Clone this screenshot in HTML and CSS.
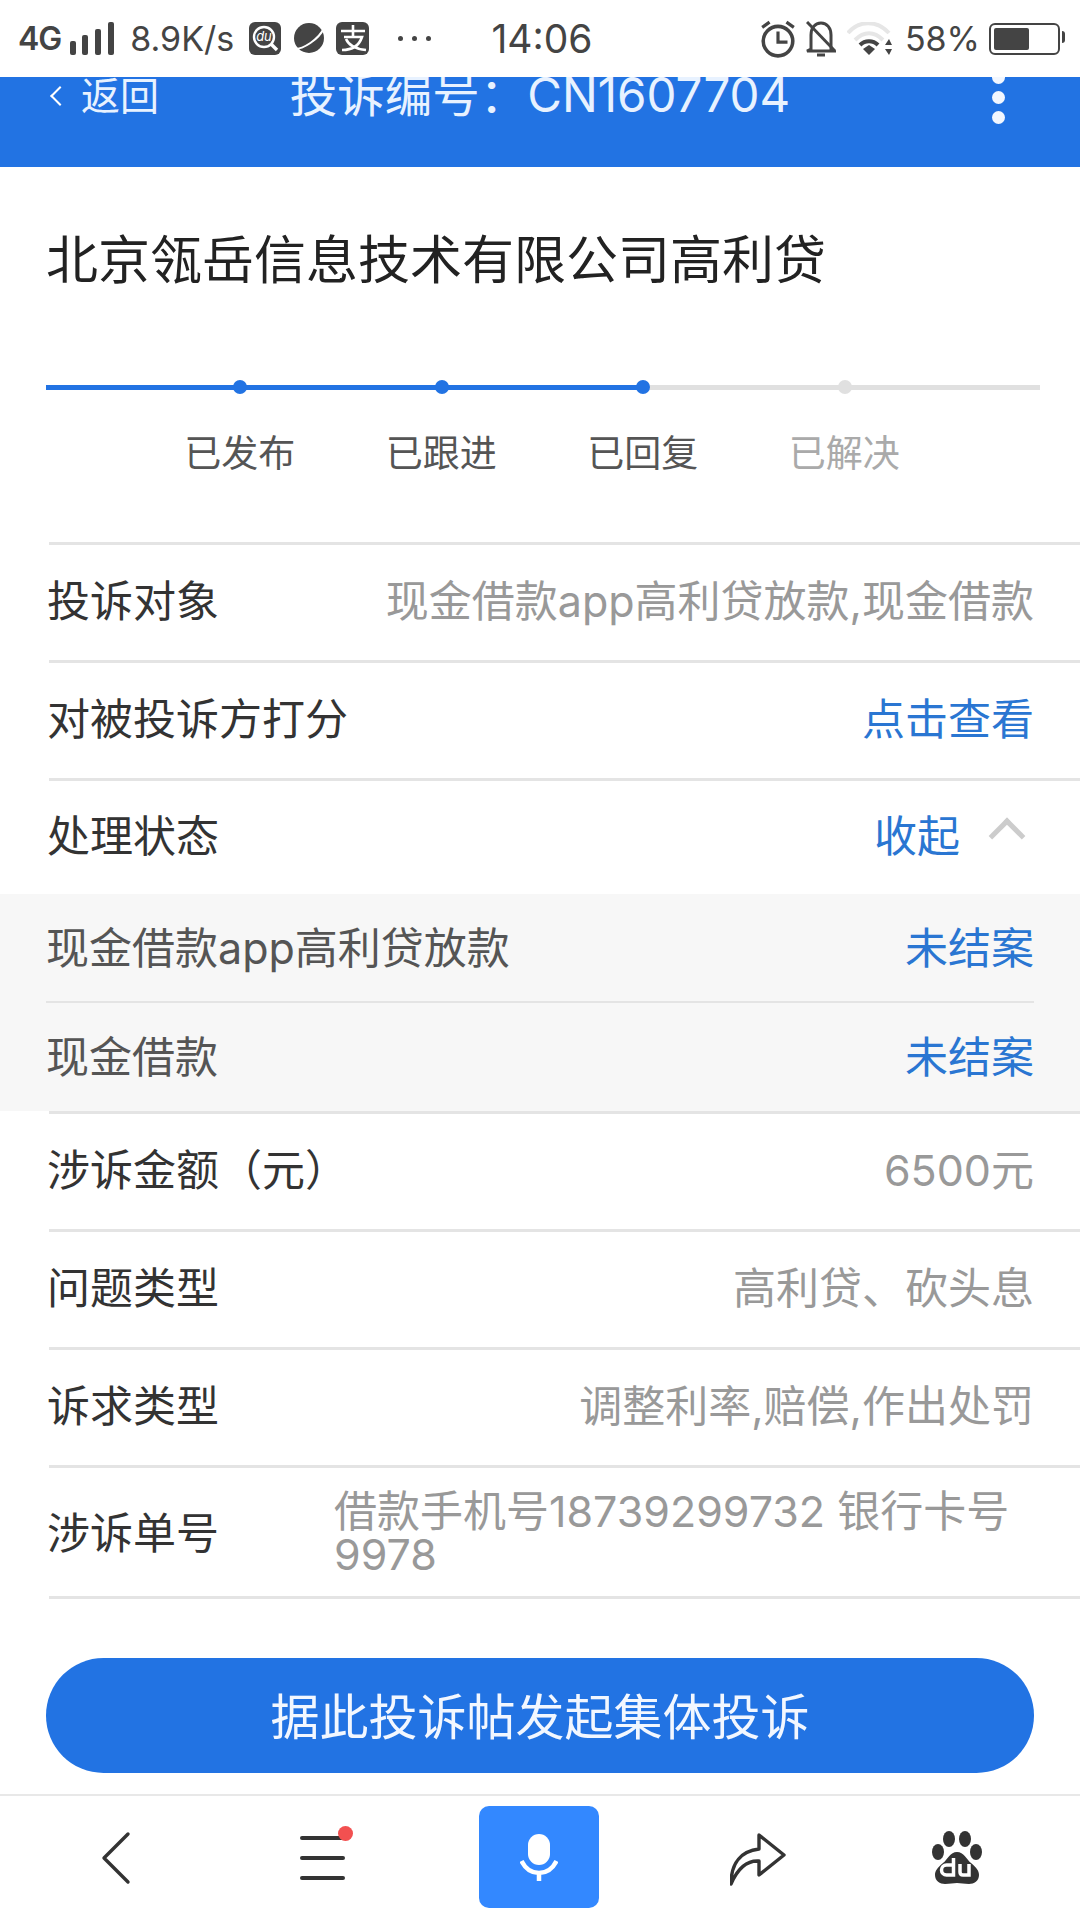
FILE: index.html
```html
<!DOCTYPE html>
<html lang="zh-CN">
<head>
  <meta charset="UTF-8" />
  <meta name="viewport" content="width=device-width, initial-scale=1.0"/>
  <title>投诉详情</title>
  <link rel="stylesheet" href="styles.css">
</head>
<body>

  <div class="statusbar">
    <div class="status-left">
      <span class="net">4G</span>
      <svg class="signal" width="44" height="34" viewBox="0 0 44 34"><g fill="#444"><rect x="0" y="19" width="6" height="14" rx="2"/><rect x="12" y="13" width="6" height="20" rx="2"/><rect x="25" y="7" width="6" height="26" rx="2"/><rect x="38" y="0" width="6" height="33" rx="2"/></g></svg>
      <span class="speed">8.9K/s</span>
      <svg class="app" width="32" height="33" viewBox="0 0 32 33"><rect width="32" height="33" rx="6" fill="#444"/><circle cx="15" cy="15" r="10" fill="none" stroke="#fff" stroke-width="2.4"/><path d="M22 22l6 6" stroke="#fff" stroke-width="3.4"/><text x="15" y="19" class="app-du">du</text></svg>
      <svg class="app" width="33" height="33" viewBox="0 0 33 33"><circle cx="17" cy="16" r="15" fill="#444"/><path d="M1 27C11 28 27 17 32 6" fill="none" stroke="#fff" stroke-width="2"/></svg>
      <svg class="app" width="33" height="33" viewBox="0 0 33 33"><rect width="33" height="33" rx="6" fill="#444"/><path d="M5 9h24M17 3v12M8 15h18c-3 9-10 13-20 13M10 17c3 7 10 10 20 11" fill="none" stroke="#fff" stroke-width="2.6"/></svg>
      <span class="dots3"><i></i><i></i><i></i></span>
    </div>
    <div class="clock">14:06</div>
    <div class="status-right">
      <svg class="st-alarm" width="36" height="38" viewBox="0 0 34 36"><circle cx="17" cy="20" r="14" fill="none" stroke="#444" stroke-width="3.4"/><path d="M17 11v10h9" fill="none" stroke="#444" stroke-width="3"/><path d="M2 7l7-5M32 7l-7-5" stroke="#444" stroke-width="3"/></svg>
      <svg class="st-bell" width="30" height="36" viewBox="0 0 30 36"><path d="M5 28V14C5 7 9 2 15 2s10 5 10 12v14l3 2H1zM11 34h8" fill="none" stroke="#444" stroke-width="3"/><path d="M1 1l28 29" stroke="#444" stroke-width="3"/></svg>
      <svg class="st-wifi" width="46" height="34" viewBox="0 0 46 34"><path d="M1 11C12 -2 30 -2 42 11M8 18C17 9 27 9 36 18" fill="none" stroke="#e6e6e6" stroke-width="4"/><path d="M13 23C18 18 26 18 31 23" fill="none" stroke="#444" stroke-width="4"/><path d="M16 27l6-4 6 4-6 6z" fill="#444"/><path d="M42 17l3 6h-7zM42 33l3-6h-7z" fill="#444"/></svg>
      <span class="battery-pct">58%</span>
      <div class="battery"><div class="battery-level"></div></div>
    </div>
  </div>

  <header class="topbar">
    <div class="back"><span class="back-arrow"></span>返回</div>
    <div class="topbar-title">投诉编号：CN1607704</div>
    <div class="more"><i></i><i></i><i></i></div>
  </header>

  <main>
    <h1 class="title">北京瓴岳信息技术有限公司高利贷</h1>

    <div class="steps">
      <div class="step done">已发布</div>
      <div class="step done">已跟进</div>
      <div class="step done">已回复</div>
      <div class="step">已解决</div>
    </div>

    <div class="row"><span class="label">投诉对象</span><span class="value">现金借款app高利贷放款,现金借款</span></div>
    <div class="row"><span class="label">对被投诉方打分</span><span class="link">点击查看</span></div>
    <div class="row row-status">
      <span class="label">处理状态</span>
      <span class="link toggle">收起<span class="chevron"></span></span>
    </div>

    <div class="sub-list">
      <div class="sub-row"><span>现金借款app高利贷放款</span><span class="link">未结案</span></div>
      <div class="sub-row"><span>现金借款</span><span class="link">未结案</span></div>
    </div>

    <div class="row"><span class="label">涉诉金额（元）</span><span class="value">6500元</span></div>
    <div class="row"><span class="label">问题类型</span><span class="value">高利贷、砍头息</span></div>
    <div class="row"><span class="label">诉求类型</span><span class="value">调整利率,赔偿,作出处罚</span></div>
    <div class="row row-tall"><span class="label">涉诉单号</span><span class="value value-wrap">借款手机号18739299732 银行卡号9978</span></div>

    <div class="action"><button class="action-btn">据此投诉帖发起集体投诉</button></div>
  </main>

  <nav class="bottombar">
    <svg width="30" height="54" viewBox="0 0 30 54"><path d="M27 3L3 27l24 24" fill="none" stroke="#333" stroke-width="3.4" stroke-linecap="round" stroke-linejoin="round"/></svg>
    <div class="menu-icon"><i></i><i></i><i></i><b class="red-dot"></b></div>
    <div class="mic-btn">
      <svg width="38" height="47" viewBox="0 0 38 47"><rect x="8" y="0" width="22" height="31" rx="11" fill="#fff"/><path d="M1.5 27c4 8 10 12 17.500 12s13.500-4 17.500-12M19 38v9" fill="none" stroke="#fff" stroke-width="4.500"/></svg>
    </div>
    <svg width="56" height="56" viewBox="0 0 56 56"><path d="M1 54C1 32 12 21 29 19V5l25 20-25 20V31C15 30 7 40 1 54z" fill="none" stroke="#333" stroke-width="3.4" stroke-linejoin="round"/></svg>
    <svg width="50" height="54" viewBox="0 0 50 54"><g fill="#333"><ellipse cx="6" cy="21" rx="6" ry="8"/><ellipse cx="17" cy="8" rx="6" ry="8"/><ellipse cx="33" cy="8" rx="6" ry="8"/><ellipse cx="44" cy="21" rx="6" ry="8"/><path d="M25 21c7 0 9 7 14 11 6 5 8 8 8 12 0 6-5 9-10 9-5 0-8-1-12-1s-7 1-12 1C8 53 3 50 3 44c0-4 2-7 8-12 5-4 7-11 14-11z"/></g><path d="M21.500 27v17h-7a5 5 0 0 1 0-10h7M28 33v8c0 2 1 3 3 3h6V33" fill="none" stroke="#fff" stroke-width="3.500"/></svg>
  </nav>

</body>
</html>
```

FILE: styles.css
```css
body {
  margin: 0;
  width: 1080px;
  height: 1920px;
  display: flex;
  flex-direction: column;
  overflow: hidden;
  background: #fff;
  color: #333;
  font-family: Inter, "Noto Sans CJK SC", sans-serif;
}

/* status bar */
.statusbar {
  height: 77px;
  flex-shrink: 0;
  display: grid;
  grid-template-columns: 1fr auto 1fr;
  align-items: center;
  padding: 0 14px 0 18px;
  box-sizing: border-box;
  color: #444;
}
.status-left, .status-right {
  display: flex;
  align-items: center;
}
.status-right { justify-content: flex-end; }
.net {
  font-size: 32px;
  font-weight: 600;
  letter-spacing: -1px;
  margin-right: 9px;
}
.signal { margin-right: 16px; }
.speed {
  font-size: 34px;
  margin-right: 15px;
}
.app { margin-right: 11px; }
.app-du {
  font-size: 13px;
  font-style: italic;
  fill: #fff;
  text-anchor: middle;
}
.dots3 {
  display: flex;
  gap: 9px;
  margin-left: 18px;
}
.dots3 i {
  width: 5px;
  height: 5px;
  border-radius: 50%;
  background: #444;
}
.clock { font-size: 39px; }
.st-alarm { margin-right: 10px; }
.st-bell { margin-right: 11px; }
.st-wifi { margin-right: 12px; }
.battery-pct {
  font-size: 34px;
  margin-right: 9px;
}
.battery {
  width: 61px;
  height: 22px;
  border: 2px solid #444;
  border-radius: 6px;
  padding: 3px;
  position: relative;
  margin-right: 6px;
}
.battery::after {
  content: "";
  position: absolute;
  right: -7px;
  top: 6px;
  width: 3px;
  height: 12px;
  background: #444;
  border-radius: 0 3px 3px 0;
}
.battery-level {
  width: 58%;
  height: 100%;
  background: #444;
  border-radius: 2px;
}

/* blue header, its content is cut off at the top */
.topbar {
  height: 90px;
  flex-shrink: 0;
  overflow: hidden;
  background: #2273e3;
  color: #e8f2ff;
  display: grid;
  grid-template-columns: 1fr auto 1fr;
  align-items: start;
}
.back {
  display: flex;
  align-items: center;
  font-size: 39px;
  line-height: 40px;
  padding-left: 53px;
  margin-top: -1px;
}
.back-arrow {
  width: 12px;
  height: 12px;
  border-left: 2px solid #fff;
  border-bottom: 2px solid #fff;
  transform: rotate(45deg);
  margin-right: 14px;
}
.topbar-title {
  font-size: 47.5px;
  line-height: 46px;
  margin-top: -5px;
}
.more {
  justify-self: end;
  margin: -6px 75px 0 0;
  display: flex;
  flex-direction: column;
  gap: 7px;
}
.more i {
  width: 13px;
  height: 13px;
  border-radius: 50%;
  background: #f2f7ff;
}

/* main content */
main { flex: 1; }
.title {
  margin: 0;
  padding: 56px 46px 54px;
  font-size: 52px;
  line-height: 76px;
  font-weight: 400;
  color: #222;
}
.steps {
  position: relative;
  margin: 32px 40px 0 46px;
  padding-left: 93px;
  display: flex;
  height: 157px;
}
.steps::before, .steps::after {
  content: "";
  position: absolute;
  left: 0;
  top: 0;
  height: 5px;
}
.steps::before { width: 100%; background: #e0e0e0; }
.steps::after { width: 597px; background: #2273e3; }
.step {
  position: relative;
  width: 201.5px;
  text-align: center;
  font-size: 37px;
  line-height: 50px;
  padding-top: 44px;
  color: #aaa;
}
.step::before {
  content: "";
  position: absolute;
  z-index: 1;
  left: 94px;
  top: -5px;
  width: 14px;
  height: 14px;
  border-radius: 50%;
  background: #e0e0e0;
}
.step.done { color: #555; }
.step.done::before { background: #2273e3; }

.row {
  margin-left: 49px;
  padding: 0 46px 10px 0;
  height: 118px;
  box-sizing: border-box;
  border-top: 3px solid #e4e4e4;
  display: flex;
  align-items: center;
  justify-content: space-between;
  font-size: 43px;
}
.row-status { height: 116px; }
.row-tall {
  height: 134px;
  padding-bottom: 4px;
  border-bottom: 3px solid #e4e4e4;
}
.label {
  color: #333;
  flex-shrink: 0;
  margin-left: -2px;
}
.value { color: #999; text-align: right; }
.value-wrap {
  width: 700px;
  margin-top: 5px;
  text-align: left;
  line-height: 43px;
}
.link { color: #2a76d2; }
.toggle {
  display: flex;
  align-items: center;
}
.chevron {
  width: 26px;
  height: 26px;
  border-left: 5px solid #ccc;
  border-top: 5px solid #ccc;
  box-sizing: border-box;
  transform: rotate(45deg);
  margin: 6px 14px 0 34px;
}

.sub-list {
  background: #f7f7f7;
  padding: 0 46px 1px;
}
.sub-row {
  height: 101px;
  padding-bottom: 6px;
  display: flex;
  align-items: center;
  justify-content: space-between;
  font-size: 43px;
  color: #555;
}
.sub-row + .sub-row { border-top: 2px solid #e4e4e4; }

.action { padding: 59px 46px 0; }
.action-btn {
  width: 100%;
  height: 115px;
  padding: 0 0 4px;
  border: 0;
  border-radius: 58px;
  background: #2273e3;
  color: #f2f7ff;
  font-family: inherit;
  font-size: 49px;
}

/* bottom browser bar */
.bottombar {
  height: 126px;
  flex-shrink: 0;
  box-sizing: border-box;
  border-top: 2px solid #e8e8e8;
  display: grid;
  grid-template-columns: 232px 180px 254px 184px 214px;
  justify-items: center;
  align-items: center;
}
.menu-icon {
  position: relative;
  width: 45px;
  display: flex;
  flex-direction: column;
  gap: 16px;
}
.menu-icon i {
  height: 4px;
  border-radius: 2px;
  background: #333;
}
.red-dot {
  position: absolute;
  right: -8px;
  top: -10px;
  width: 15px;
  height: 15px;
  border-radius: 50%;
  background: #f25050;
}
.mic-btn {
  width: 120px;
  height: 102px;
  margin-top: -2px;
  border-radius: 10px;
  background: #3388ff;
  display: flex;
  align-items: center;
  justify-content: center;
}
```
